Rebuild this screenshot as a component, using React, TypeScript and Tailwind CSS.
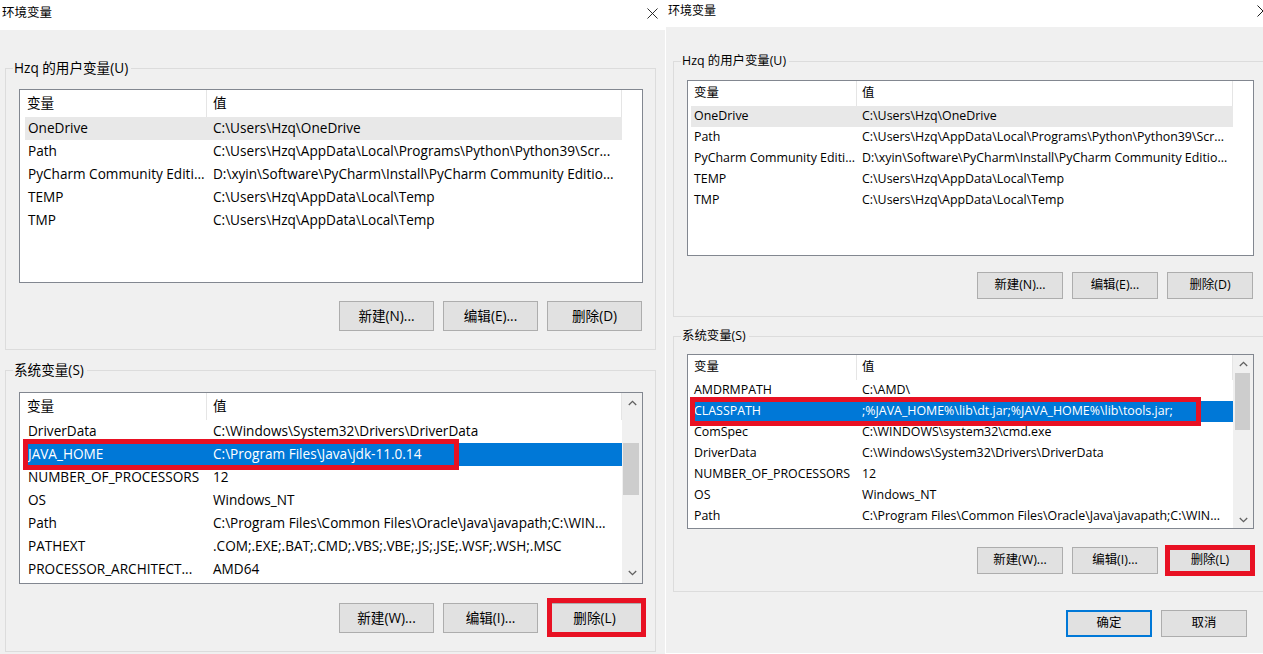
import React from 'react';

type Row = { name: string; value: string; tone?: 'hover' | 'sel'; boxed?: boolean };

const userRows: Row[] = [
  { name: 'OneDrive', value: 'C:\\Users\\Hzq\\OneDrive', tone: 'hover' },
  { name: 'Path', value: 'C:\\Users\\Hzq\\AppData\\Local\\Programs\\Python\\Python39\\Scr...' },
  { name: 'PyCharm Community Editi...', value: 'D:\\xyin\\Software\\PyCharm\\Install\\PyCharm Community Editio...' },
  { name: 'TEMP', value: 'C:\\Users\\Hzq\\AppData\\Local\\Temp' },
  { name: 'TMP', value: 'C:\\Users\\Hzq\\AppData\\Local\\Temp' },
];

const leftSysRows: Row[] = [
  { name: 'DriverData', value: 'C:\\Windows\\System32\\Drivers\\DriverData' },
  { name: 'JAVA_HOME', value: 'C:\\Program Files\\Java\\jdk-11.0.14', tone: 'sel', boxed: true },
  { name: 'NUMBER_OF_PROCESSORS', value: '12' },
  { name: 'OS', value: 'Windows_NT' },
  { name: 'Path', value: 'C:\\Program Files\\Common Files\\Oracle\\Java\\javapath;C:\\WIN...' },
  { name: 'PATHEXT', value: '.COM;.EXE;.BAT;.CMD;.VBS;.VBE;.JS;.JSE;.WSF;.WSH;.MSC' },
  { name: 'PROCESSOR_ARCHITECT...', value: 'AMD64' },
];

const rightSysRows: Row[] = [
  { name: 'AMDRMPATH', value: 'C:\\AMD\\' },
  { name: 'CLASSPATH', value: ';%JAVA_HOME%\\lib\\dt.jar;%JAVA_HOME%\\lib\\tools.jar;', tone: 'sel', boxed: true },
  { name: 'ComSpec', value: 'C:\\WINDOWS\\system32\\cmd.exe' },
  { name: 'DriverData', value: 'C:\\Windows\\System32\\Drivers\\DriverData' },
  { name: 'NUMBER_OF_PROCESSORS', value: '12' },
  { name: 'OS', value: 'Windows_NT' },
  { name: 'Path', value: 'C:\\Program Files\\Common Files\\Oracle\\Java\\javapath;C:\\WIN...' },
];

function Chevron({ down }: { down?: boolean }) {
  return (
    <svg width="9" height="6" viewBox="0 0 9 6" fill="none">
      <path
        d={down ? 'M0.8 1 L4.5 4.7 L8.2 1' : 'M0.8 5 L4.5 1.3 L8.2 5'}
        stroke="#606060"
        strokeWidth="1.3"
      />
    </svg>
  );
}

function CloseX({ size }: { size: number }) {
  return (
    <svg width={size} height={size} viewBox="0 0 12 12" fill="none">
      <path d="M0.5 0.5 L11.5 11.5 M11.5 0.5 L0.5 11.5" stroke="#1a1a1a" strokeWidth="1" />
    </svg>
  );
}

function Scrollbar({ big }: { big: boolean }) {
  return (
    <div className="flex w-[20px] shrink-0 flex-col bg-[#f0f0f0]">
      <div className={`flex items-center justify-center ${big ? 'h-[20px]' : 'h-[17px]'}`}>
        <Chevron />
      </div>
      <div className={`bg-[#cdcdcd] ${big ? 'ml-[1px] mt-[30px] h-[52px] w-[16px]' : 'ml-[2px] mt-[1px] h-[57px] w-[15px]'}`} />
      <div className="flex-1" />
      <div className={`flex items-center justify-center ${big ? 'h-[20px]' : 'h-[17px]'}`}>
        <Chevron down />
      </div>
    </div>
  );
}

function ListBox({ big, rows, height, scroll }: { big: boolean; rows: Row[]; height: string; scroll?: boolean }) {
  return (
    <div className={`flex border border-[#828790] bg-white ${height}`}>
      <div className="flex min-w-0 flex-1 flex-col">
        {/* заголовок колонок */}
        <div className={`flex shrink-0 ${big ? 'h-[27px]' : 'h-[25px]'}`}>
          <div className={`flex items-center border-r border-[#e5e5e5] ${big ? 'w-[187px] pl-[7px]' : 'w-[169px] pl-[6px]'}`}>变量</div>
          <div className={`flex flex-1 items-center border-r border-[#e5e5e5] ${big ? 'pl-[6px]' : 'pl-[5px]'}`}>值</div>
        </div>
        <div className={big ? 'pl-[5px]' : 'pl-[3px]'}>
          {rows.map((r) => (
            <div
              key={r.name}
              className={`relative flex items-center ${big ? 'h-[23px]' : 'h-[21px]'} ${
                r.tone === 'sel' ? 'bg-[#0078d7] text-white' : r.tone === 'hover' ? 'bg-[#e8e8e8]' : ''
              }`}
            >
              <div className={`shrink-0 overflow-hidden whitespace-nowrap pl-[3px] ${big ? 'w-[181px]' : 'w-[165px]'}`}>{r.name}</div>
              <div className={`min-w-0 flex-1 overflow-hidden whitespace-nowrap ${big ? 'pl-[7px]' : 'pl-[6px]'}`}>{r.value}</div>
              {r.boxed && (
                <div
                  className={`pointer-events-none absolute border-[5px] border-[#e81123] ${
                    big ? '-left-[2px] -top-[4px] h-[31px] w-[436px]' : '-left-[1px] -top-[4px] h-[29px] w-[511px]'
                  }`}
                />
              )}
            </div>
          ))}
        </div>
      </div>
      {scroll ? <Scrollbar big={big} /> : <div className="w-[20px] shrink-0" />}
    </div>
  );
}

function Btn({ big, children, focus }: { big: boolean; children: React.ReactNode; focus?: boolean }) {
  return (
    <div
      className={`flex items-center justify-center bg-[#e1e1e1] ${big ? 'h-[30px] w-[95px]' : 'h-[27px] w-[86px]'} ${
        focus ? 'border-2 border-[#0078d7]' : 'border border-[#adadad]'
      }`}
    >
      {children}
    </div>
  );
}

function Group({ label, cls, body, children }: { label: string; cls: string; body: string; children: React.ReactNode }) {
  return (
    <div className={cls}>
      <div className="flex h-[18px] items-end">
        <div className="h-[9px] w-[8px] border-l border-t border-[#dcdcdc]" />
        <span className="self-center pl-[1px] pr-[3px] leading-[18px]">{label}</span>
        <div className="h-[9px] flex-1 border-r border-t border-[#dcdcdc]" />
      </div>
      <div className={`border-x border-b border-[#dcdcdc] ${body}`}>{children}</div>
    </div>
  );
}

export default function App() {
  return (
    <div className="flex h-[654px] w-[1263px] overflow-hidden bg-white font-['Open_Sans','Noto_Sans_CJK_SC',sans-serif] text-black">
      {/* левое окно */}
      <div className="flex w-[665px] shrink-0 flex-col text-[13.6px]">
        <div className="flex h-[30px] shrink-0 items-start justify-between bg-white">
          <span className="pl-[2px] pt-[4px] text-[12.5px] leading-[18px]">环境变量</span>
          <div className="mr-[7px] mt-[8px]">
            <CloseX size={11} />
          </div>
        </div>
        <div className="flex-1 bg-[#f0f0f0]">
          <Group label="Hzq 的用户变量(U)" cls="ml-[5px] mt-[29px] w-[651px]" body="pl-[13px] pr-[12px] pt-[12px] pb-[18px]">
            <ListBox big rows={userRows} height="h-[194px]" />
            <div className="mt-[18px] flex justify-end gap-[9px] pr-[1px]">
              <Btn big>新建(N)...</Btn>
              <Btn big>编辑(E)...</Btn>
              <Btn big>删除(D)</Btn>
            </div>
          </Group>
          <Group label="系统变量(S)" cls="ml-[5px] mt-[11px] w-[651px]" body="pl-[13px] pr-[12px] pt-[13px] pb-[18px]">
            <ListBox big rows={leftSysRows} height="h-[192px]" scroll />
            <div className="mt-[19px] flex justify-end gap-[9px] pr-[1px]">
              <Btn big>新建(W)...</Btn>
              <Btn big>编辑(I)...</Btn>
              <div className="relative">
                <Btn big>删除(L)</Btn>
                <div className="pointer-events-none absolute -bottom-[4px] -right-[4px] -top-[5px] left-0 border-[5px] border-[#e81123]" />
              </div>
            </div>
          </Group>
        </div>
      </div>

      {/* правое окно, обрезано краем экрана */}
      <div className="ml-[1px] w-[597px] shrink-0 overflow-hidden">
        <div className="flex h-[654px] w-[610px] flex-col text-[12.4px]">
          <div className="flex h-[27px] shrink-0 items-start justify-between bg-white">
            <span className="pl-[2px] pt-[2px] text-[12px] leading-[18px]">环境变量</span>
            <div className="mr-[7px] mt-[5px]">
              <CloseX size={12} />
            </div>
          </div>
          <div className="h-[626px] bg-[#f0f0f0]">
            <Group label="Hzq 的用户变量(U)" cls="ml-[7px] mt-[25px] w-[594px]" body="pl-[13px] pr-[12px] pt-[10px] pb-[17px]">
              <ListBox big={false} rows={userRows} height="h-[176px]" />
              <div className="mt-[16px] flex justify-end gap-[9px] pr-[1px]">
                <Btn big={false}>新建(N)...</Btn>
                <Btn big={false}>编辑(E)...</Btn>
                <Btn big={false}>删除(D)</Btn>
              </div>
            </Group>
            <Group label="系统变量(S)" cls="ml-[7px] mt-[10px] w-[594px]" body="pl-[13px] pr-[12px] pt-[9px] pb-[17px]">
              <ListBox big={false} rows={rightSysRows} height="h-[175px]" scroll />
              <div className="mt-[18px] flex justify-end gap-[9px] pr-[1px]">
                <Btn big={false}>新建(W)...</Btn>
                <Btn big={false}>编辑(I)...</Btn>
                <div className="relative">
                  <Btn big={false}>删除(L)</Btn>
                  <div className="pointer-events-none absolute -inset-[2px] border-[5px] border-[#e81123]" />
                </div>
              </div>
            </Group>
            <div className="mt-[18px] flex gap-[9px] pl-[400px]">
              <Btn big={false} focus>
                确定
              </Btn>
              <Btn big={false}>取消</Btn>
            </div>
          </div>
        </div>
      </div>
    </div>
  );
}
